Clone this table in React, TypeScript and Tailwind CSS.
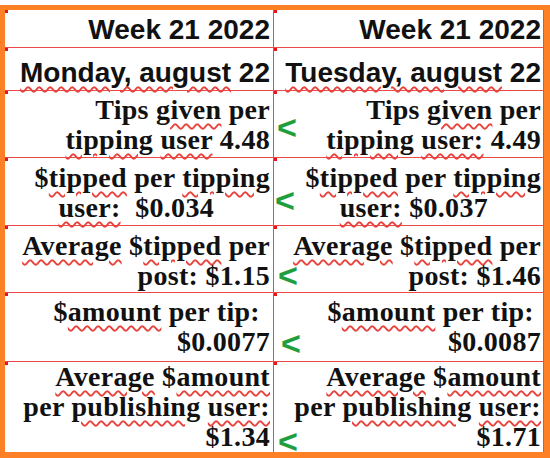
import React from "react";

const W =
  "underline decoration-wavy decoration-[#e8423c] decoration-[1.5px] underline-offset-[4px]";

const SANS = "font-['Liberation_Sans',Arial,sans-serif] font-bold text-[28px] leading-[30px]";
const SERIF =
  "font-['Liberation_Serif','Times_New_Roman',serif] font-bold text-[28px] leading-[30px] tracking-[0.3px]";

function Sq() {
  return <div className="absolute left-0 top-0 w-[3px] h-[3px] bg-[#e8141b]" />;
}

function Lt({ top, left }: { top: number; left: number }) {
  return (
    <span
      className="absolute font-['Liberation_Sans',Arial,sans-serif] text-[34px] leading-[20px] text-[#1f9e3e]"
      style={{ top: top + 7, left }}
    >
      &lt;
    </span>
  );
}

type Cell = { lines: React.ReactNode[]; mr?: (number | undefined)[] };
type Row = { h: number; font: string; pb: number; left: Cell; right: Cell; lt?: { top: number; left: number } };

const rows: Row[] = [
  {
    h: 38,
    font: SANS,
    pb: 2,
    left: { lines: [<>Week 21 2022</>] },
    right: { lines: [<>Week 21 2022</>] },
  },
  {
    h: 43,
    font: SANS,
    pb: 2,
    left: {
      lines: [
        <>
          <span className={W}>Monday, august</span> 22
        </>,
      ],
    },
    right: {
      lines: [
        <>
          <span className={W}>Tuesday, august</span> 22
        </>,
      ],
    },
  },
  {
    h: 67,
    font: SERIF,
    pb: 2,
    left: {
      lines: [
        <>
          Tips <span className={W}>given</span> per
        </>,
        <>
          <span className={W}>tipping</span> <span className={W}>user</span> 4.48
        </>,
      ],
    },
    right: {
      lines: [
        <>
          Tips <span className={W}>given</span> per
        </>,
        <>
          <span className={W}>tipping</span> <span className={W}>user:</span> 4.49
        </>,
      ],
    },
    lt: { top: 19, left: 3 },
  },
  {
    h: 68,
    font: SERIF,
    pb: 2,
    left: {
      lines: [
        <>
          $<span className={W}>tipped</span> per <span className={W}>tipping</span>
        </>,
        <>
          <span className={W}>user:</span>
          {"\u00a0\u00a0"}$0.034
        </>,
      ],
      mr: [0, 56],
    },
    right: {
      lines: [
        <>
          $<span className={W}>tipped</span> per <span className={W}>tipping</span>
        </>,
        <>
          <span className={W}>user:</span> $0.037
        </>,
      ],
      mr: [0, 53],
    },
    lt: { top: 25, left: 1 },
  },
  {
    h: 67,
    font: SERIF,
    pb: 1,
    left: {
      lines: [
        <>
          <span className={W}>Average</span> $<span className={W}>tipped</span> per
        </>,
        <>post: $1.15</>,
      ],
    },
    right: {
      lines: [
        <>
          <span className={W}>Average</span> $<span className={W}>tipped</span> per
        </>,
        <>post: $1.46</>,
      ],
    },
    lt: { top: 32, left: 4 },
  },
  {
    h: 69,
    font: SERIF,
    pb: 4,
    left: {
      lines: [
        <>
          $<span className={W}>amount</span> per tip:
        </>,
        <>$0.0077</>,
      ],
      mr: [10, 0],
    },
    right: {
      lines: [
        <>
          $<span className={W}>amount</span> per tip:
        </>,
        <>$0.0087</>,
      ],
      mr: [7, 0],
    },
    lt: { top: 33, left: 7 },
  },
  {
    h: 90,
    font: SERIF,
    pb: 0,
    left: {
      lines: [
        <>
          <span className={W}>Average</span> $<span className={W}>amount</span>
        </>,
        <>
          per <span className={W}>publishing</span> <span className={W}>user:</span>
        </>,
        <>$1.34</>,
      ],
    },
    right: {
      lines: [
        <>
          <span className={W}>Average</span> $<span className={W}>amount</span>
        </>,
        <>
          per <span className={W}>publishing</span> <span className={W}>user:</span>
        </>,
        <>$1.71</>,
      ],
    },
    lt: { top: 62, left: 4 },
  },
];

function CellView({ cell, pr, pb, border }: { cell: Cell; pr: number; pb: number; border: string }) {
  return (
    <div
      className={`relative flex flex-col justify-end ${border} border-[#f0494a]`}
      style={{ paddingRight: pr, paddingBottom: pb }}
    >
      <Sq />
      {cell.lines.map((l, i) => (
        <div
          key={i}
          className="text-right whitespace-nowrap"
          style={{ marginRight: cell.mr?.[i] ?? 0 }}
        >
          {l}
        </div>
      ))}
    </div>
  );
}

export default function App() {
  return (
    <div className="w-[550px] h-[458px] bg-white pt-[5px] overflow-hidden">
      <div className="w-[550px] h-[453px] border-l-[5px] border-t-[5px] border-r-[6px] border-b-[6px] border-[#fd7f26] flex flex-col text-[#111]">
        {rows.map((r, i) => (
          <div
            key={i}
            className={`grid grid-cols-[269px_270px] ${r.font} ${i < rows.length - 1 ? "border-b border-[#f0494a]" : ""}`}
            style={{ height: r.h }}
          >
            <CellView cell={r.left} pr={3} pb={r.pb} border="border-r" />
            <div className="relative flex">
              <div className="flex-1 grid">
                <CellView cell={r.right} pr={2} pb={r.pb} border="border-r" />
              </div>
              {r.lt && <Lt top={r.lt.top} left={r.lt.left} />}
            </div>
          </div>
        ))}
      </div>
    </div>
  );
}
